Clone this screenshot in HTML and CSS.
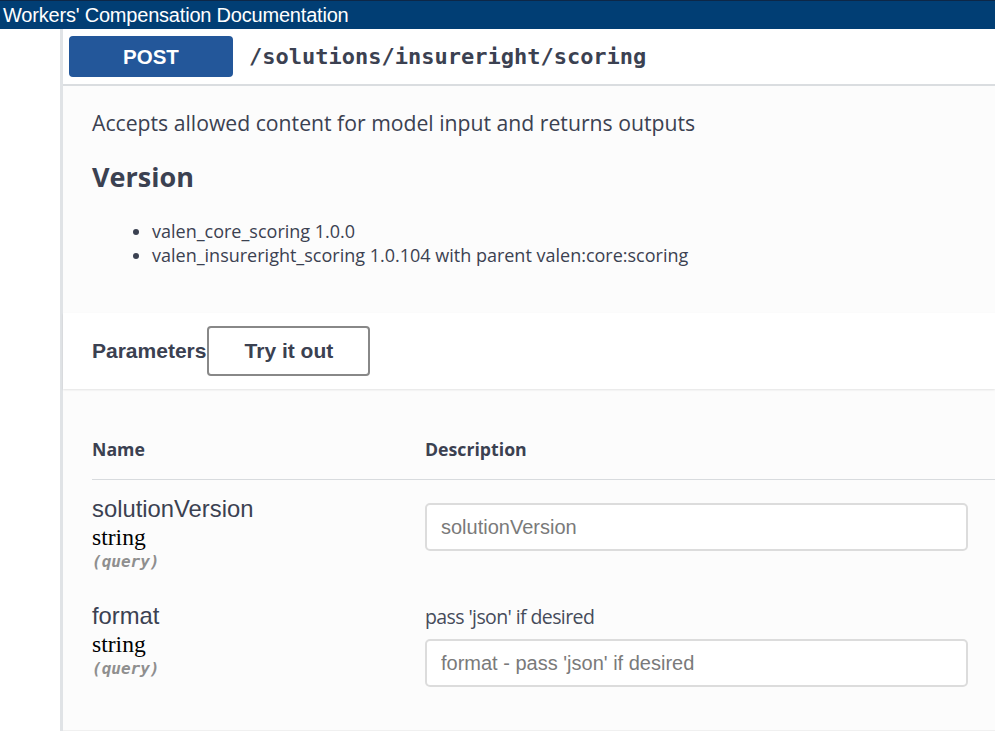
FILE: index.html
```html
<!DOCTYPE html>
<html>
<head>
<meta charset="utf-8">
<link rel="stylesheet" href="styles.css">
</head>
<body>
<div class="topbar">Workers' Compensation Documentation</div>
<div class="page">
  <div class="gutter"></div>
  <div class="card">
    <div class="summary">
      <span class="method">POST</span>
      <span class="path">/solutions/insureright/scoring</span>
    </div>
    <div class="body">
      <div class="desc">
        <p class="lead">Accepts allowed content for model input and returns outputs</p>
        <h3 class="version">Version</h3>
        <ul class="versions">
          <li>valen_core_scoring 1.0.0</li>
          <li>valen_insureright_scoring 1.0.104 with parent valen:core:scoring</li>
        </ul>
      </div>
      <div class="params-head">
        <span class="params-title">Parameters</span>
        <button class="try">Try it out</button>
      </div>
      <div class="params">
        <div class="thead">
          <div class="col-name">Name</div>
          <div class="col-desc">Description</div>
        </div>
        <div class="row row1">
          <div class="col-name">
            <div class="pname">solutionVersion</div>
            <div class="ptype">string</div>
            <div class="pin">(query)</div>
          </div>
          <div class="col-desc">
            <input class="field" type="text" placeholder="solutionVersion">
          </div>
        </div>
        <div class="row row2">
          <div class="col-name">
            <div class="pname">format</div>
            <div class="ptype">string</div>
            <div class="pin">(query)</div>
          </div>
          <div class="col-desc">
            <div class="pdesc">pass 'json' if desired</div>
            <input class="field" type="text" placeholder="format - pass 'json' if desired">
          </div>
        </div>
      </div>
    </div>
  </div>
</div>
</body>
</html>
```
FILE: styles.css
```css
html, body {
  margin: 0;
  padding: 0;
  background: #ffffff;
  font-family: "Liberation Sans", Arial, sans-serif;
  height: 100%;
  overflow: hidden;
}

.topbar {
  height: 28px;
  border-top: 1px solid #0d2747;
  background: #013e74;
  color: #ffffff;
  font-size: 20px;
  line-height: 28px;
  padding-left: 3px;
  letter-spacing: -0.2px;
  white-space: nowrap;
}

.page {
  display: flex;
  height: 702px;
}

.gutter {
  width: 60px;
  flex: none;
}

.card {
  flex: 1;
  border-left: 3px solid #e0e3e6;
  display: flex;
  flex-direction: column;
  min-width: 0;
}

.summary {
  height: 55px;
  display: flex;
  align-items: center;
  padding-left: 6px;
  border-bottom: 2px solid #dadde0;
  background: #ffffff;
}

.method {
  width: 164px;
  height: 41px;
  border-radius: 4px;
  background: #23579a;
  color: #ffffff;
  font-weight: bold;
  font-size: 20.5px;
  display: flex;
  align-items: center;
  justify-content: center;
}

.path {
  margin-left: 16px;
  font-family: "DejaVu Sans Mono", monospace;
  font-weight: bold;
  font-size: 22px;
  color: #3b4151;
}

.body {
  flex: 1;
  background: #fcfcfc;
  display: flex;
  flex-direction: column;
  border-bottom: 1px solid #f0f0f0;
}

.desc {
  padding: 24px 29px 0 29px;
  height: 227px;
  box-sizing: border-box;
  font-family: "Open Sans", sans-serif;
  color: #3b4151;
}

.lead {
  margin: 0;
  font-size: 21.2px;
  line-height: 26px;
  white-space: nowrap;
}

.version {
  margin: 25px 0 0 0;
  font-size: 27px;
  line-height: 32px;
  font-weight: bold;
}

.versions {
  margin: 26px 0 0 0;
  padding-left: 60px;
  font-size: 18px;
  line-height: 24px;
  white-space: nowrap;
}

.params-head {
  height: 76px;
  background: #ffffff;
  box-shadow: 0 1px 2px rgba(0, 0, 0, 0.1);
  display: flex;
  align-items: center;
  padding-left: 29px;
}

.params-title {
  font-weight: bold;
  font-size: 21px;
  color: #3b4151;
}

.try {
  margin-left: 1px;
  width: 163px;
  height: 50px;
  background: #ffffff;
  border: 2px solid #888888;
  border-radius: 4px;
  font-family: "Liberation Sans", Arial, sans-serif;
  font-weight: bold;
  font-size: 21px;
  color: #3b4151;
  padding: 0;
}

.params {
  padding: 0 0 0 29px;
}

.thead {
  display: flex;
  height: 91px;
  align-items: flex-end;
  padding-bottom: 18px;
  box-sizing: border-box;
  border-bottom: 1px solid #d8dbde;
  font-family: "Open Sans", sans-serif;
  font-weight: bold;
  font-size: 17.7px;
  line-height: 24px;
  color: #3b4151;
}

.col-name {
  width: 333px;
  flex: none;
}

.col-desc {
  flex: 1;
  padding-right: 27px;
}

.row {
  display: flex;
}

.row1 {
  padding-top: 15px;
}

.row2 {
  padding-top: 29px;
}

.pname {
  font-size: 23.8px;
  line-height: 28px;
  color: #3b4151;
  white-space: nowrap;
}

.ptype {
  font-family: "Liberation Serif", serif;
  font-size: 23.6px;
  line-height: 28px;
  color: #000000;
}

.pin {
  font-family: "DejaVu Sans Mono", monospace;
  font-style: italic;
  font-weight: bold;
  font-size: 16px;
  line-height: 22px;
  color: #8f8f8f;
}

.row1 .col-desc {
  padding-top: 8px;
}

.pdesc {
  font-family: "Open Sans", sans-serif;
  font-size: 19.5px;
  letter-spacing: -0.6px;
  line-height: 24px;
  color: #454b5a;
  margin-top: 3px;
  margin-bottom: 10px;
  white-space: nowrap;
}

.field {
  display: block;
  width: 100%;
  height: 48px;
  box-sizing: border-box;
  border: 2px solid #dcdcdc;
  border-radius: 5px;
  background: #ffffff;
  padding: 0 14px;
  font-family: "Liberation Sans", Arial, sans-serif;
  font-size: 20px;
  color: #333333;
  outline: none;
}

.field::placeholder {
  color: #7a7a7a;
}
```
